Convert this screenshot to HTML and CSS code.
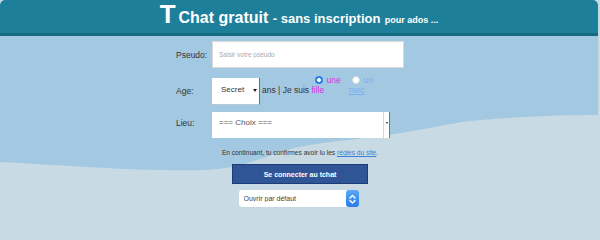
FILE: index.html
```html
<!DOCTYPE html>
<html lang="fr">
<head>
<meta charset="utf-8">
<title>TChat gratuit</title>
<link rel="stylesheet" href="styles.css">
</head>
<body>
<div class="page">
  <header class="top">
    <h1 class="title"><span class="title-t">T</span>Chat gratuit <span class="title-sub">- sans inscription</span> <span class="title-small">pour ados ...</span></h1>
  </header>
  <main class="main">
    <svg class="waves" viewBox="0 0 600 187" preserveAspectRatio="none" aria-hidden="true">
      <path d="M0,126 C60,129 150,136 205,134 C250,132 270,117 300,111 C335,104 365,103 390,99 C430,93 455,86 483,84 C530,80 570,79 600,79 L600,187 L0,187 Z" fill="#c8dbe5"/>
    </svg>
    <form class="form">
      <div class="fields">
        <div class="row row-pseudo">
          <label class="lbl" for="pseudo">Pseudo:</label>
          <input class="txt" id="pseudo" type="text" placeholder="Saisir votre pseudo">
        </div>
        <div class="row row-age">
          <label class="lbl">Age:</label>
          <span class="sel sel-age"><select><option>Secret</option></select><span class="arrow"></span></span>
          <span class="agetext">ans | Je suis <label class="choice choice-f"><input type="radio" name="sexe" checked>une fille</label><label class="choice choice-m"><input type="radio" name="sexe">un <span class="mec">mec</span></label></span>
        </div>
        <div class="row row-lieu">
          <label class="lbl">Lieu:</label>
          <span class="sel sel-lieu"><select><option>=== Choix ===</option></select><span class="arrowbox"><span class="arrow"></span></span></span>
        </div>
      </div>
      <div class="actions">
        <p class="notice">En continuant, tu confirmes avoir lu les <a href="#">règles du site</a>.</p>
        <button class="btn" type="button">Se connecter au tchat</button>
        <span class="opener"><select><option>Ouvrir par défaut</option></select><span class="stepper"><svg viewBox="0 0 13 16" width="13" height="16"><path d="M4 7 L6.5 4.5 L9 7 M4 9.5 L6.5 12 L9 9.5" fill="none" stroke="#fff" stroke-width="1.4" stroke-linecap="round" stroke-linejoin="round"/></svg></span></span>
      </div>
    </form>
  </main>
</div>
</body>
</html>
```
FILE: styles.css
```css
* { box-sizing: border-box; }
html, body { margin: 0; padding: 0; }
body {
  background: #c8dbe5;
  font-family: "Liberation Sans", Arial, sans-serif;
}
.page {
  width: 598px;
  height: 223px;
  overflow: hidden;
  background: #a3c8e2;
  border-radius: 5px 5px 0 0;
}
.top {
  height: 36px;
  background: #1e7f9a;
  border-bottom: 3px solid #166a82;
  border-radius: 5px 5px 0 0;
}
.title {
  margin: 0;
  text-align: center;
  color: #fff;
  font-size: 16px;
  font-weight: bold;
  line-height: 26px;
  white-space: nowrap;
}
.title-t { font-size: 26px; line-height: 29px; margin-right: 3px; }
.title-sub { font-size: 13px; }
.title-small { font-size: 9px; }

.main { position: relative; height: 187px; }
.waves { position: absolute; left: 0; top: 0; width: 100%; height: 187px; z-index: 0; display: block; }
.form { position: relative; z-index: 1; padding-top: 5px; }
.fields { width: 246px; margin: 0 auto 0 176px; }
.row { display: flex; align-items: center; }
.row-pseudo { height: 27px; margin-bottom: 10px; }
.row-age { height: 27px; margin-bottom: 7px; }
.row-lieu { height: 26px; }
.lbl { width: 36px; flex: none; font-size: 8.5px; color: #333; }
.row-lieu .lbl { margin-top: -4px; }
.row-age .lbl { margin-top: -2px; }

.txt {
  width: 192px;
  height: 27px;
  border: 1px solid #dadada;
  background: #fff;
  padding: 0 0 0 6px;
  font-family: "Liberation Sans", Arial, sans-serif;
  font-size: 6.5px;
  color: #333;
  outline: none;
}
.txt::placeholder { color: #aaa; }

.sel {
  display: flex;
  align-items: center;
  background: #fff;
  height: 100%;
}
.sel select {
  appearance: none;
  -webkit-appearance: none;
  border: 0;
  background: transparent;
  outline: none;
  flex: 1;
  min-width: 0;
  height: 100%;
  font-family: "Liberation Sans", Arial, sans-serif;
  font-size: 8px;
  color: #333;
}
.arrow {
  width: 0;
  height: 0;
  border-left: 2px solid transparent;
  border-right: 2px solid transparent;
  border-top: 3px solid #222;
}
.sel-age {
  width: 48px;
  flex: none;
  border-right: 1px solid #6d6d6d;
  border-bottom: 1px solid #b9c9d4;
}
.sel-age select { padding: 0 0 3px 9px; }
.sel-age .arrow { margin: 0 2px 2px 0; }
.sel-lieu {
  width: 178px;
  flex: none;
  border-right: 1px solid #777;
}
.sel-lieu select { padding: 0 0 5px 7px; color: #555; }
.arrowbox {
  width: 6px;
  height: 100%;
  border-left: 1px solid #d5d5d5;
  display: flex;
  align-items: center;
  justify-content: center;
  padding-bottom: 4px;
}
.arrowbox .arrow { border-left-width: 1.5px; border-right-width: 1.5px; border-top-width: 2px; }

.agetext {
  align-self: flex-start;
  margin: -3px 0 0 2px;
  font-size: 8.5px;
  line-height: 10px;
  color: #333;
  white-space: normal;
}
.choice {
  display: inline-block;
  vertical-align: baseline;
  line-height: 10px;
}
.choice-f { width: 37px; color: #e02ee0; }
.choice-m { width: 30px; color: #7aaef0; }
.mec { text-decoration: underline; }
.choice input {
  appearance: none;
  -webkit-appearance: none;
  width: 8px;
  height: 8px;
  margin: 0 3px 0 4px;
  border-radius: 50%;
  vertical-align: -1px;
  background: #fff;
  border: 1px solid #d9d9d9;
}
.choice input:checked {
  border: 0;
  background: radial-gradient(circle, #fff 0 1.6px, #2a84ea 2.1px);
}

.actions {
  display: flex;
  flex-direction: column;
  align-items: center;
  padding-left: 2px;
}
.notice {
  margin: 11px 0 0;
  font-size: 6.6px;
  line-height: 8px;
  color: #333;
}
.notice a { color: #3b7fd6; text-decoration: underline; }
.btn {
  margin-top: 7px;
  width: 136px;
  height: 20px;
  background: #2f5597;
  border: 1px solid #1c3c77;
  color: #fff;
  font-family: "Liberation Sans", Arial, sans-serif;
  font-weight: bold;
  font-size: 7px;
  padding: 0;
}
.opener {
  margin-top: 6px;
  margin-right: 3px;
  width: 120px;
  height: 17px;
  display: flex;
  align-items: center;
  background: #fff;
  border-radius: 3px;
  box-shadow: 0 0 0 0.5px #c9d4db;
}
.opener select {
  appearance: none;
  -webkit-appearance: none;
  border: 0;
  background: transparent;
  outline: none;
  flex: 1;
  min-width: 0;
  height: 100%;
  padding: 0 0 0 5px;
  font-family: "Liberation Sans", Arial, sans-serif;
  font-size: 7px;
  color: #444;
}
.stepper {
  width: 13px;
  height: 17px;
  display: flex;
  align-items: center;
  justify-content: center;
  border-radius: 3px;
  background: linear-gradient(#5ba7f8, #2a7be8);
}
.stepper svg { display: block; }
```
